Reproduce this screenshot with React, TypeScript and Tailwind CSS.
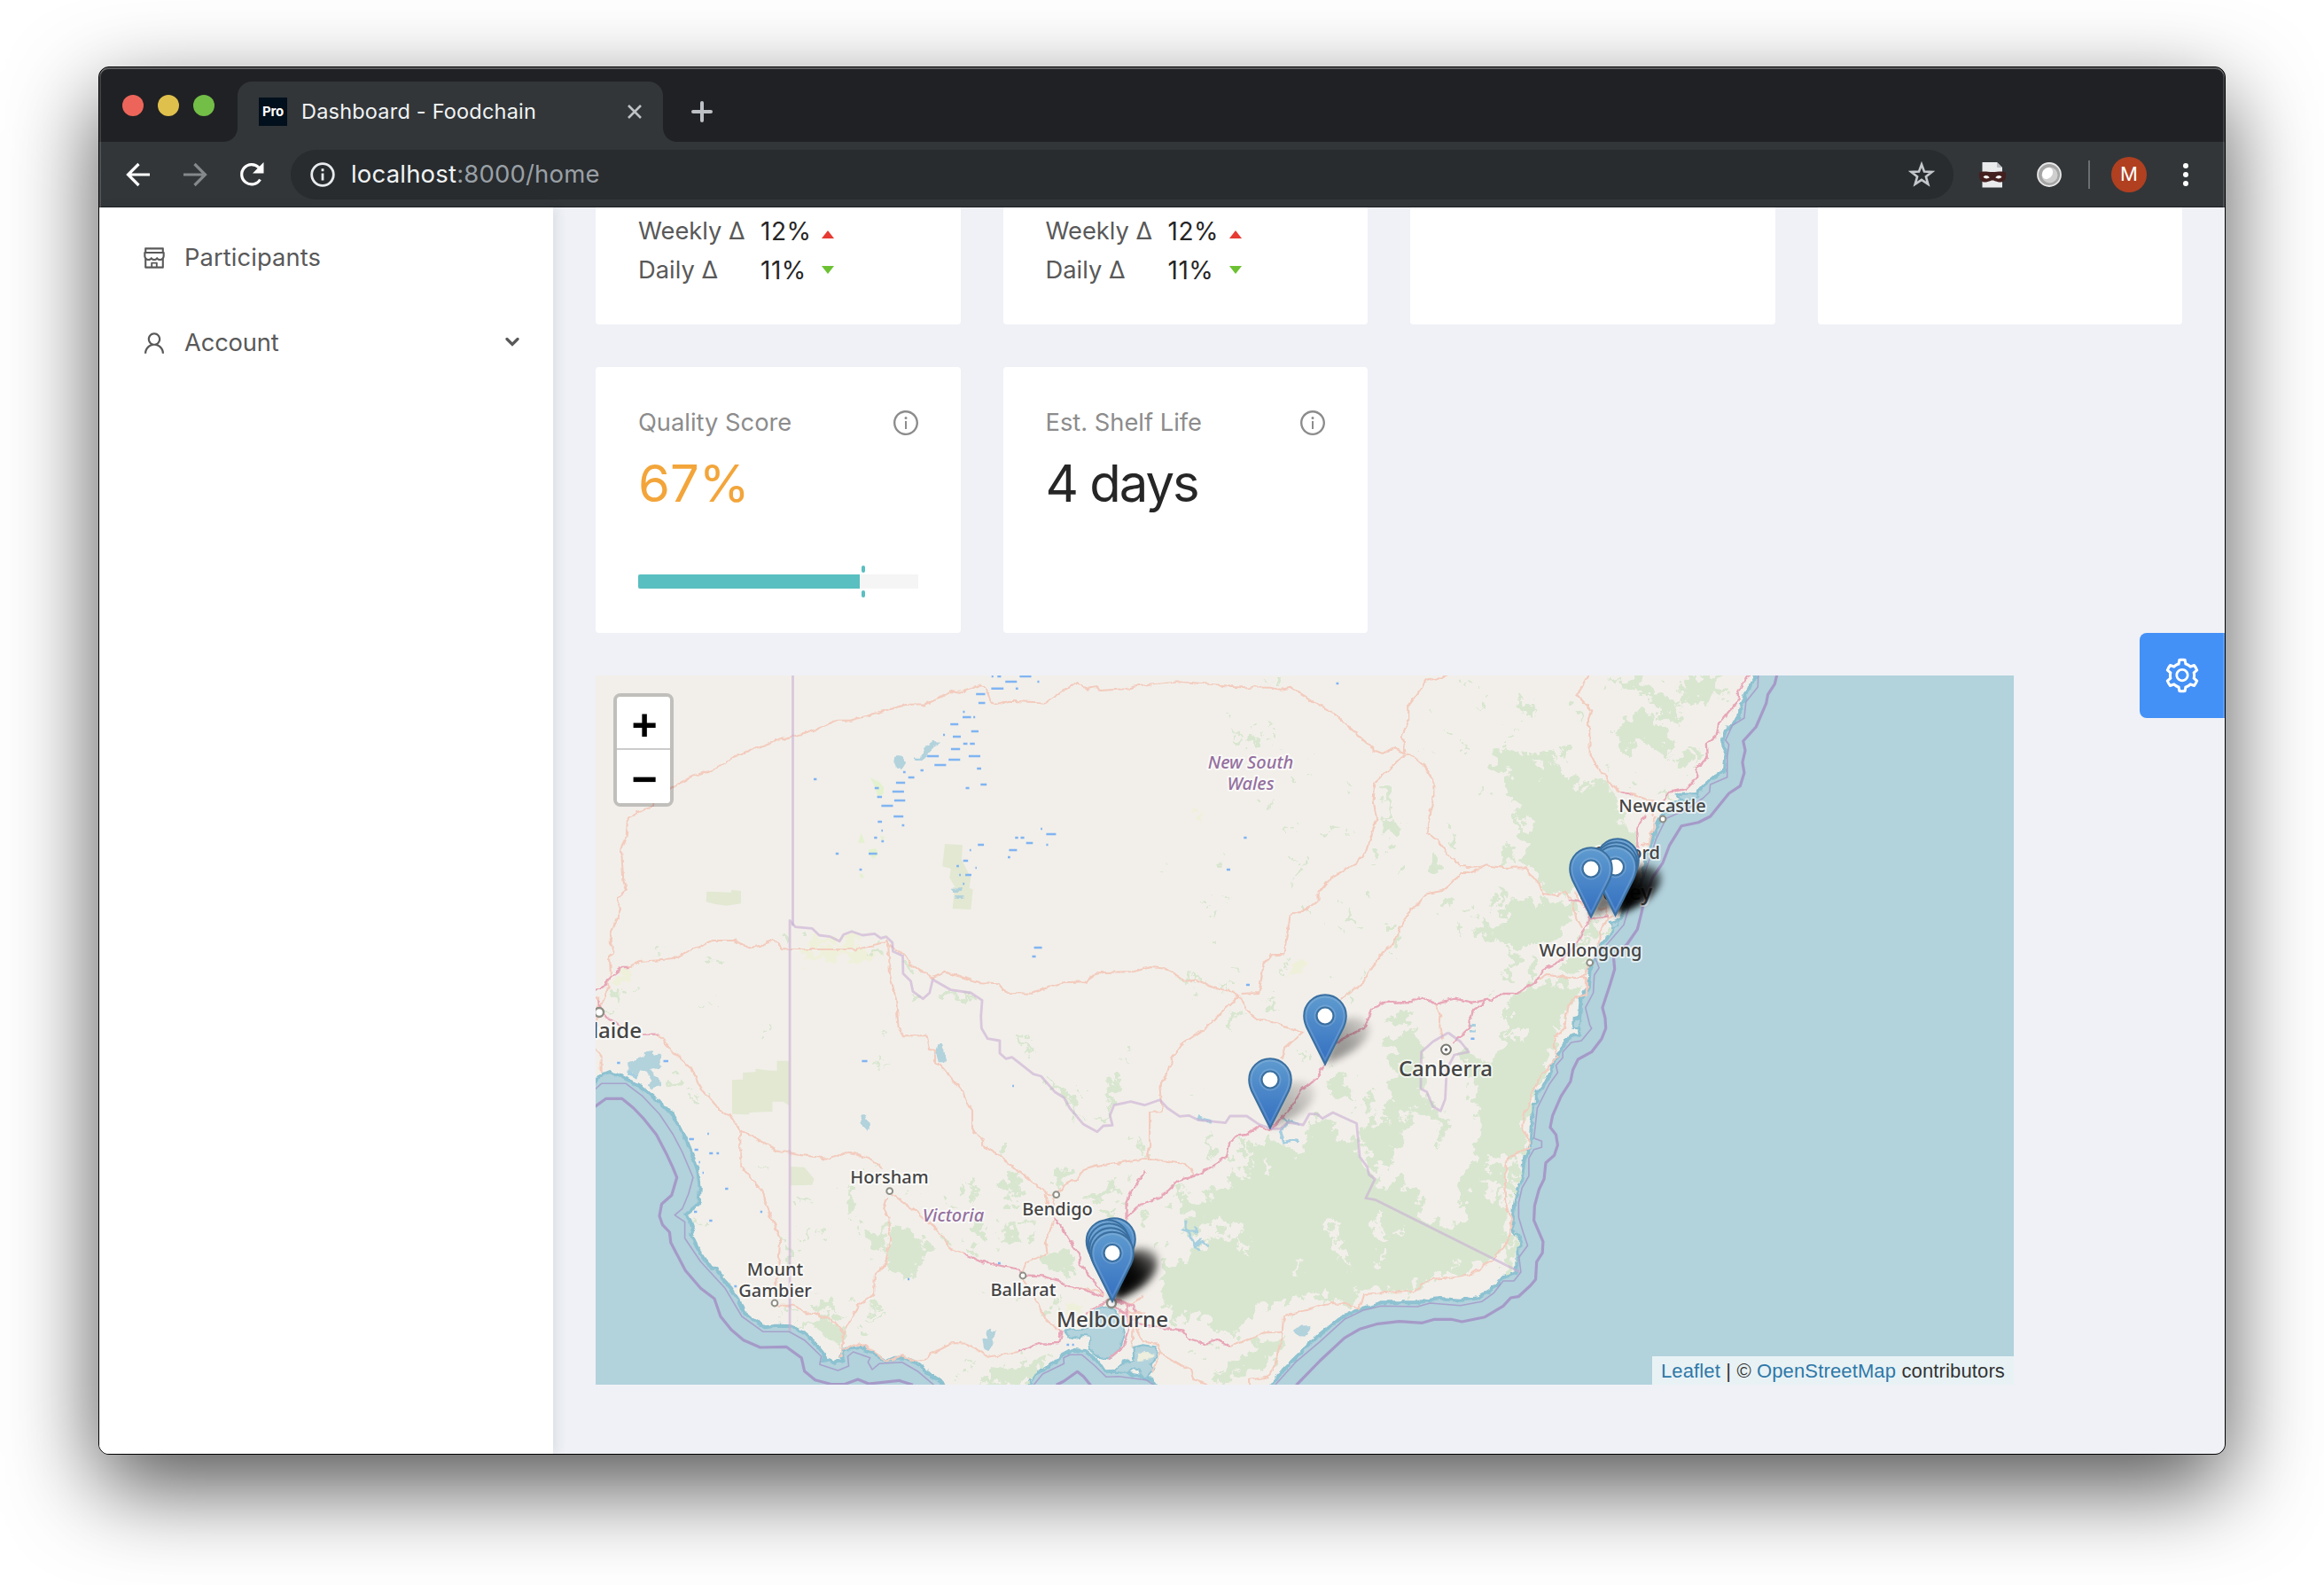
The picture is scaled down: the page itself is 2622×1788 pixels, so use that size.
import React from "react";
import {
  AiOutlineInfoCircle,
  AiOutlineSetting,
  AiOutlineShop,
  AiOutlineUser,
} from "react-icons/ai";

/* ------------------------------------------------------------------ */
/* Map geometry                                                        */
/* ------------------------------------------------------------------ */

// The map is digitised on six sheets: [origin x, origin y, x scale, y scale].
const SHEETS: Record<string, [number, number, number, number]> = {
  A: [-2, -2, 0.34439, 1 / 3],
  B: [528, -2, 0.34439, 1 / 3],
  C: [1028, -2, 0.38265, 1 / 3],
  D: [-2, 398, 0.34439, 1 / 3],
  E: [528, 398, 0.34439, 1 / 3],
  F: [1028, 398, 0.38265, 1 / 3],
};

function points(source: string): [number, number][] {
  let sheet = SHEETS.A;
  const out: [number, number][] = [];
  for (const token of source.trim().split(/\s+/)) {
    if (SHEETS[token]) {
      sheet = SHEETS[token];
      continue;
    }
    const [x, y] = token.split(",").map(Number);
    out.push([sheet[0] + x * sheet[2], sheet[1] + y * sheet[3]]);
  }
  return out;
}

const toPath = (source: string) =>
  "M" + points(source).map(([x, y]) => `${x.toFixed(1)} ${y.toFixed(1)}`).join("L");

const COAST =
  "D -20,200 6,178 20,160 50,147 90,163 130,185 170,212 210,243 250,285 280,330 300,370 320,420 340,480 348,540 345,585 325,610 300,628 315,650 328,690 320,703 340,745 370,790 385,812 400,812 418,835 420,845 450,880 475,920 490,960 520,985 560,1012 600,1007 640,1008 680,1025 720,1060 755,1105 750,1125 770,1120 790,1135 800,1122 815,1127 810,1105 825,1085 870,1080 910,1095 960,1127 985,1115 1020,1115 1060,1135 1100,1170 1140,1200 1160,1240 1400,1240 1428,1205 1445,1170 1490,1145 1530,1110 E 0,1105 30,1088 70,1092 110,1125 135,1162 180,1160 240,1175 290,1188 320,1240 640,1240 680,1205 720,1155 780,1095 840,1035 900,985 960,955 1040,928 1160,928 1230,915 1300,920 1360,912 1400,885 1440,840 1485,825 1485,740 1500,735 1490,700 1470,680 F 18,640 21,600 25,570 43,510 52,440 70,390 75,260 88,250 88,210 105,205 130,150 135,120 160,70 185,30 215,20 C 215,1200 200,1195 200,1170 215,1165 218,1100 240,1060 245,1000 270,930 300,890 315,860 308,845 335,830 345,800 380,740 400,690 410,620 430,560 450,490 490,440 530,420 560,408 580,380 610,350 640,330 645,260 635,235 645,190 685,150 690,110 710,60 730,10 735,-40 A -40,-40";

const FORESTS = [
  // Alpine forest
  "E 390,700 410,640 400,590 370,560 440,575 500,555 560,500 620,505 600,440 640,385 700,380 735,420 790,410 800,330 820,300 860,315 900,370 965,370 975,435 1000,490 1060,540 1090,512 1175,560 1180,595 1150,620 1210,668 1300,660 1320,650 1305,590 1320,480 1370,450 1440,470 1450,600 1450,720 1400,780 1330,825 1200,845 1150,885 1060,890 1000,880 930,930 880,915 800,900 720,930 640,945 600,990 570,1040 490,1020 440,960 400,990 350,975 320,900 330,780 380,790 470,730 500,690 480,640 420,700",
  // Snowy range and far south coast
  "E 1040,40 1160,0 1180,80 1170,210 1200,240 1235,285 1255,380 1230,330 1150,260 1120,300 1100,400 1060,470 1020,470 990,420 970,340 1000,310 1060,300 1060,200 1080,100",
  "E 1290,90 1340,60 1390,150 1420,80 1500,50 1530,0 1568,0 1568,150 1530,280 1500,340 1520,390 1460,430 1380,450 1310,620 1310,500 1350,420 1370,330 1350,250 1330,170",
  "F 0,0 40,40 45,0 130,0 150,50 140,80 80,200 60,280 40,330 30,250 0,280",
  "C 0,1120 60,1050 150,1040 220,1060 200,1100 170,1150 170,1200 0,1200",
  "B 1480,1100 1568,1060 1568,1200 1460,1200",
  "F 10,440 40,460 40,500 5,490",
  "E 1465,690 1500,735 1485,745 1485,820 1440,810 1450,760",
  "F 20,690 45,730 25,750 20,830 0,800",
  // Blue Mountains and Wollemi
  "C 0,250 60,280 130,260 160,320 220,400 270,360 310,390 340,480 380,540 380,600 300,640 210,740 110,740 100,700 60,650 60,620 30,540 20,420 0,400",
  "B 1480,270 1568,290 1568,700 1510,620 1500,480 1530,450 1460,360 1430,310 1395,250 1440,240",
  "C 0,790 60,770 180,770 200,800 170,850 160,890 70,930 0,930",
  "B 1480,750 1540,770 1568,830 1568,930 1450,930 1380,890 1420,850 1480,850",
  "C 60,950 90,960 80,1040 60,1030 70,990",
  "C 170,960 200,940 235,980 220,1020 160,1010",
  "C 240,840 270,820 265,900 220,910",
  "C 270,880 310,860 300,890 275,905",
  "C 340,180 360,140 420,130 480,240 490,270 440,240 400,230 330,280 340,240 310,205",
  "C 310,20 400,10 430,60 480,90 520,150 470,140 400,60 330,40",
  "C 530,6 640,6 610,70 580,110 540,100 520,50",
  "C 550,260 580,250 570,300 555,300",
  "C 500,260 540,260 530,330 510,320",
  // Inland New South Wales
  "B 1045,380 1065,385 1068,440 1065,490 1110,505 1100,550 1065,540 1055,470 1040,410",
  "B 550,195 580,225 562,245",
  "B 600,245 615,210 640,205 640,225",
  "B 670,465 680,430 692,440",
  "B 1485,85 1520,90 1560,140 1500,115",
  "B 1230,780 1260,765 1290,800 1240,790",
  "B 1430,640 1440,575 1470,600 1470,645",
  "B 1200,650 1215,610 1240,640 1220,665",
  "B 1080,655 1100,635 1115,655 1095,675",
  "B 1255,530 1275,535 1285,600 1270,600",
  "B 1350,890 1370,830 1400,870 1380,895",
  "B 548,1145 570,1145 560,1200 548,1200",
  "B 1050,1180 1080,1155 1140,1160 1120,1190",
  // Western Victoria
  "D 895,725 950,660 960,760 930,770",
  "D 970,690 1000,670 1090,710 1095,760 1050,810 1010,860 1000,830 970,820",
  "D 650,990 720,1000 740,970 830,1010 810,1080 770,1060 740,1030",
  "D 720,920 770,920 800,975 760,960",
  "D 1230,640 1290,660 1270,710 1240,690",
  "D 1340,690 1380,650 1385,700 1350,740",
  "D 1225,720 1260,730 1250,770 1230,750",
  "D 1465,780 1500,750 1568,770 1568,830 1500,820",
  "D 1260,1190 1340,1150 1420,1120 1500,1100 1480,1140 1430,1180 1420,1205 1260,1205",
  "D 1330,520 1380,490 1410,560 1360,560",
  "D 830,560 850,550 860,620 840,650",
  "D 1240,510 1255,540 1245,600 1235,580",
  "D 1480,160 1540,200 1568,240 1568,280 1530,230",
  "D 1500,520 1530,475 1568,478 1540,510 1510,560",
  "D 865,1020 900,1010 905,1035 870,1040",
  "E 150,165 170,180 165,240 130,330 110,335 145,270",
  "E 0,215 35,240 60,310 20,260",
  "E 80,570 150,520 210,520 140,570 90,600",
  "E 480,1200 530,1140 610,1100 670,1060 720,1060 700,1110 600,1150 560,1190",
  "E 470,375 490,370 495,450 480,430",
  "E 865,160 925,170 950,240 890,240",
  "E 570,400 610,370 610,410 580,420",
  "E 0,780 40,780 40,820 0,820",
];

const FARMLAND = [
  "D 453,175 488,173 488,150 530,148 530,137 580,143 600,143 600,110 640,110 640,262 620,248 585,248 585,282 510,285 508,292 453,290",
  "D 645,468 690,470 722,510 715,530 645,532",
  "A 370,737 450,740 450,732 482,735 482,778 435,785 398,780 368,772",
  "A 1150,576 1208,580 1205,630 1235,690 1230,725 1242,730 1235,798 1175,795 1182,720 1165,690 1170,660 1142,652",
];

const SOFT_YELLOW = [
  "A 712,888 790,895 810,912 830,890 862,892 862,918 705,920",
  "A 690,938 930,925 920,958 680,965",
  "B 765,960 800,965 790,1000 745,1005",
  "B 440,475 470,475 465,495 440,495",
  "A 60,1010 120,1000 100,1040 60,1040",
  "E 900,680 925,670 925,705 905,705",
  "E 20,930 60,920 60,950 25,960",
];

const CLEARINGS = [
  "E 860,640 890,630 880,700 930,760 940,800 910,780 870,700",
  "E 500,640 530,670 590,680 570,705 510,700 490,670",
  "E 1020,640 1050,650 1060,720 1040,710",
  "E 1070,695 1110,690 1100,710 1080,715",
  "E 1040,750 1070,770 1050,800 1030,770",
  "E 755,810 780,795 770,820",
  "E 660,450 680,440 690,500 670,490",
  "E 1360,510 1420,520 1430,570 1400,590",
  "E 560,710 600,740 580,750",
  "E 1270,780 1280,790 1265,830",
  "B 1540,290 1568,310 1568,340",
  "B 1500,480 1530,500 1520,540",
  "C 60,480 90,520 60,530",
  "C 120,290 150,300 150,320",
];

// Scattered scrub: centre and radii, in sheet coordinates.
const SCRUB =
  "B 690,33,12,5 540,137,7,6 620,180,6,4 652,190,6,5 675,220,7,8 800,270,8,6 752,357,9,8 940,382,9,8 640,413,13,6 805,342,5,4 720,250,4,3 1270,202,10,6 1195,125,12,5 1380,100,14,5 1345,27,20,8 1160,270,6,8 1212,265,6,6 1310,255,7,8 1325,285,7,6 1378,400,5,16 750,520,8,5 880,528,14,6 855,530,6,6 950,540,6,5 1018,622,12,9 1070,572,8,8 785,640,7,14 760,630,9,4 768,670,9,7 765,715,4,14 885,700,8,5 1005,742,9,7 910,768,5,10 940,820,7,12 965,842,12,6 798,790,5,13 465,770,14,7 490,815,6,12 530,780,4,4 515,650,9,13 320,662,9,6 503,913,12,9 845,857,4,4 908,866,5,4 1080,862,9,9 1100,895,12,10 1080,958,6,4 885,1028,6,5 725,988,7,7 975,1012,4,9 940,1105,8,14 678,1122,9,10 695,1080,5,4 400,1030,20,5 450,1045,20,5 525,1050,20,6 430,1085,8,8 555,1008,5,5 1400,770,20,22 1440,800,16,22 1300,865,9,16 1345,800,14,8 1470,960,10,26 1460,1020,12,24 1540,990,14,30 1520,1110,40,26 1550,1160,40,30 1400,1068,6,6 1440,745,20,8 A 395,970,14,12 115,1075,16,10 70,1090,10,30 60,1135,12,6 650,885,12,16 930,940,10,14 1028,1000,10,18 1060,1100,14,8 1160,1085,40,10 1210,1100,30,8 1150,1075,20,8 355,1120,10,4 393,1110,5,8 205,950,14,4 D 570,8,8,10 960,30,8,6 947,118,10,4 270,180,10,10 320,218,14,6 328,250,14,8 380,225,6,6 680,580,14,8 780,540,6,4 750,700,6,12 690,690,8,8 555,460,5,4 625,712,8,8 637,760,8,26 345,655,16,8 900,475,12,5 845,600,10,34 865,670,10,12 1200,560,10,14 1160,590,12,8 1175,610,12,8 1335,415,10,10 1380,500,18,14 1410,545,10,20 1340,520,10,10 1345,620,9,14 1380,600,16,10 1260,650,18,10 1170,725,12,16 1380,690,8,20 1340,720,12,14 1440,700,10,12 1410,650,14,8 925,950,12,10 885,1020,18,10 920,985,8,6 1265,885,8,7 1495,950,10,12 1520,920,5,20 1380,920,14,6 1230,1135,12,5 1410,60,8,26 1425,95,6,10 1200,1170,10,6 1035,545,10,5 860,920,12,4 625,955,6,20 650,960,6,16 E 10,490,14,12 200,92,6,4 300,270,5,3 60,215,5,5 870,130,5,5 960,272,8,5 790,95,6,12 425,225,5,3 245,380,4,16 270,410,4,16 255,400,12,12 640,400,20,16 590,460,16,16 540,440,12,10 700,400,16,16 380,560,16,14 340,600,10,8 270,640,12,8 320,740,10,14 150,620,20,10 180,600,14,8 890,200,24,20 920,200,16,20 1000,250,16,40 1060,380,14,40 1240,350,14,30 1480,540,20,40 430,1100,12,8 480,1080,14,6 460,1120,10,6 640,1070,20,10 730,1000,6,4 550,5,8,4 500,1155,8,6 1380,540,18,22 1330,640,16,8 C 45,105,14,14 70,128,16,8 200,90,10,6 215,135,10,10 170,260,10,18 275,60,6,8 370,370,10,8 300,310,6,4 490,90,12,8 505,145,18,10 435,150,14,20 460,260,20,22 350,265,14,8 590,45,20,40 660,120,6,10 10,205,6,6 480,415,14,8 520,90,12,30 640,80,8,10";

function scrubShapes() {
  let sheet = SHEETS.B;
  const out: { x: number; y: number; rx: number; ry: number }[] = [];
  for (const token of SCRUB.split(" ")) {
    if (SHEETS[token]) {
      sheet = SHEETS[token];
      continue;
    }
    const [x, y, rx, ry] = token.split(",").map(Number);
    out.push({
      x: sheet[0] + x * sheet[2],
      y: sheet[1] + y * sheet[3],
      rx: rx * sheet[2],
      ry: ry * sheet[3],
    });
  }
  return out;
}

const LAKES = [
  "A 985,278 1000,276 1018,288 1022,302 1010,322 995,318 982,300",
  "A 1095,240 1110,228 1135,230 1130,242 1110,250 1098,262 1090,280 1070,292 1050,290 1048,284 1068,284 1080,262",
  "A 1172,728 1210,726 1200,738 1180,738",
  "A 1186,750 1212,750 1212,762 1186,762",
  "D 112,115 165,95 165,78 190,76 200,92 222,88 215,115 222,130 200,140 180,135 195,155 215,165 218,195 185,203 180,185 190,175 175,150 150,145 140,170 125,150 108,165 108,150 118,140",
  "D 1120,75 1125,52 1142,50 1145,75 1155,100 1150,118 1130,118 1125,100",
  "D 875,292 885,292 890,308 905,320 906,340 895,350 880,335",
  "D 1285,1030 1300,1012 1305,1025 1322,1025 1305,1050 1308,1068 1295,1095 1275,1085 1270,1050 1290,1048",
  "E 755,1022 775,1007 805,1005 806,1022 790,1040 762,1038",
  "C 500,408 560,405 570,415 540,430 510,425",
  "C 305,840 330,835 330,855 310,862",
  "C 200,1175 215,1170 215,1200 195,1200",
  // Port Phillip and Western Port
  "E 100,955 130,938 165,950 190,990 198,1040 185,1085 150,1118 115,1112 80,1085 90,1060 85,1040 60,1038 55,1050 20,1045 5,1025 30,1018 80,1015 85,990",
  "E 160,1160 195,1130 230,1125 228,1080 260,1072 300,1078 308,1110 285,1135 300,1150 270,1185 255,1175 250,1155 230,1150 205,1170",
];

const CREEKS = [
  "E 400,650 402,680 415,700 430,735 445,755",
  "E 385,682 410,690 435,690 435,670",
  "E 430,730 455,725 472,740",
  "E 428,735 450,712",
  "E 710,345 722,388 745,378 765,378 765,388",
  "E 715,300 735,320 722,335 708,350",
  "E 440,302 485,316",
  "E 735,310 770,322",
  "B 1330,1188 1350,1190",
  "E 1330,12 1350,12",
  "A 1048,288 1068,290",
  "D 110,150 145,165",
];

// Salt-lake hatching: x, y, length.
const HATCH =
  "A 1303,9,6 1322,9,12 1395,9,38 1348,27,38 1453,27,6 1302,50,40 1382,50,8 1252,69,30 1260,99,22 1209,129,6 1208,147,28 1243,147,6 1168,171,26 1236,195,24 1144,207,6 1176,213,26 1210,237,14 1232,237,16 1170,255,30 1092,279,38 1228,279,38 1162,291,38 1116,309,38 1255,321,14 1013,333,8 1070,327,10 1030,351,20 720,357,10 990,369,30 1267,375,20 920,387,14 1218,387,12 978,399,38 928,417,16 984,429,36 942,447,38 982,483,32 930,501,14 1009,513,8 942,531,5 918,555,10 942,567,8 1464,525,5 1482,543,32 1380,555,10 1398,555,12 1416,573,22 1482,579,6 1258,579,20 1360,597,26 1356,621,8 1231,597,5 792,609,10 900,609,28 1210,633,16 1188,651,8 1250,657,4 870,663,8 1197,681,5 1217,681,20 1209,711,5 1442,927,26 1436,957,12 B 893,33,8 590,555,10 534,663,12 598,1053,12 D 228,111,16 76,117,10 878,111,18 1371,195,5 312,375,16 372,357,5 330,411,12 378,423,12 402,423,8 344,453,4 356,489,4 430,543,10 545,621,7 328,621,10 378,651,10 1028,849,6 1324,795,8 460,873,8 1550,1071,6 E 10,1071,8 28,1071,6 1334,35,12";

function hatchSegments() {
  let sheet = SHEETS.A;
  const out: string[] = [];
  for (const token of HATCH.split(" ")) {
    if (SHEETS[token]) {
      sheet = SHEETS[token];
      continue;
    }
    const [x, y, length] = token.split(",").map(Number);
    out.push(
      `M${(sheet[0] + x * sheet[2]).toFixed(1)} ${(sheet[1] + y * sheet[3]).toFixed(1)}h${(length * sheet[2]).toFixed(1)}`,
    );
  }
  return out.join("");
}

const MARITIME = [
  "D 0,268 40,238 92,238 130,270 165,308 205,360 240,430 258,470 272,505 255,565 222,595 215,635 225,665 248,690 252,725 300,820 350,880 395,915 415,975 450,1020 490,1055 545,1080 630,1078 680,1115 690,1160 725,1190 780,1205 820,1205 865,1188 900,1203 1000,1192 1045,1207",
  "D 1515,1207 E 0,1195 45,1162 65,1178 90,1210",
  "E 762,1208 840,1125 920,1048 970,1018 1030,1000 1100,992 1175,997 1215,985 1270,985 1305,993 1380,977 1440,940 1465,912 1490,908 1530,870 F 85,850 88,790 105,760 107,722 80,650 82,600 95,545 110,510 115,455 140,430 150,395 145,360 128,335 135,295 160,230 188,180 195,140 210,105 250,80 280,35 292,0 C 290,1165 282,1130 305,1050 318,1000 315,960 355,915 385,865 395,820 405,770 430,690 460,640 480,580 515,515 565,503 600,483 655,405 688,380 700,335 695,300 703,260 697,228 735,180 765,100 770,70 790,35 797,0",
];

const BASELINE = [
  "D 0,210 25,187 105,187 160,230 215,290 260,360 290,420 325,505 310,560 290,610 265,632 298,655 298,710 350,790 430,880 485,975 555,1027 640,1027 690,1055 745,1110 740,1138 800,1158 835,1143 832,1110 850,1095 905,1115 898,1130 912,1155 935,1135 1010,1130 1060,1160 1115,1208",
  "D 1440,1208 1470,1170 1540,1135 E 0,1115 20,1105 60,1105 100,1140 140,1180 180,1178 270,1190 300,1210",
  "E 692,1208 760,1130 840,1060 920,985 980,955 1040,940 1160,942 1200,930 1300,938 1370,925 1410,895 1440,855 1475,855 1498,825 1492,775 1520,735 F 48,690 35,640 35,590 45,540 65,500 65,440 80,410 103,403 103,382 80,372 90,270 125,190 150,150 145,125 165,100 165,80 190,48 220,42 250,0 C 245,1190 232,1130 255,1080 258,1020 272,995 260,960 300,910 345,850 360,790 400,700 440,560 470,490 530,460 580,420 598,400 600,375 650,350 650,280 655,240 645,225 665,175 700,150 705,95 740,45 742,0",
];

const STATE_BORDERS = [
  "A 652,0 652,853",
  "D 642,1025 A 642,835 660,857 715,862 738,885 775,890 805,905 818,883 845,872 880,885 920,880 940,895 958,890 978,910 980,940 1012,955 1013,1015 1038,1040 1045,1075 1078,1100 1100,1080 1110,1035 1170,1070 1235,1080 1272,1105 1268,1160 D 1270,0 1290,35 1330,42 1330,85 1350,103 1370,98 1440,155 1465,162 1510,215 1540,235 E 20,270 65,325 110,350 130,330 160,328 152,295 165,260 220,248 265,260 315,242 340,270 380,298 410,295 440,310 530,320 545,297 600,297 640,325 680,340 710,340 735,318 785,327 805,290 830,290 848,305 882,285 960,322 970,435 995,470 1000,495 1020,510 990,575 1020,580 1495,825",
  "E 1260,15 1300,45 1327,80 1280,90 1255,140 1250,240 1235,280 1210,265 1190,215 1170,205 1172,80 1210,45 1260,15",
];

const ROADS = [
  "A 20,1130 40,1090 55,1020 52,950 65,945 55,910 55,880 90,800 78,760 105,735 97,700 90,600 107,550 110,500 140,470 185,450 250,390 315,350 400,322 450,285 515,257 600,225 700,200 800,158 840,158 1020,105 1085,103 1130,85 1170,57 1195,62 1245,45 1262,37 1285,48 1300,95 1320,105 1360,92 1485,98 B 0,57 35,33 80,50 105,45 120,57 200,52 240,43 385,27 530,40 545,45 675,47 710,53 745,47 895,143 1020,260 1045,270 1080,252 1120,268 1135,272 1185,315 1212,360 1212,420 1200,470 1190,540 1220,558 1250,600 1300,650 1330,655 1380,648 1440,657 1515,655 1525,680 1560,712 C 105,745 150,750 175,740 190,765",
  "B 1120,268 1108,215 1130,160 1130,105 1190,25 1270,0",
  "B 1120,272 1020,370 1015,430 1025,490 1005,560 990,610 960,640 910,670 870,695 835,740 835,765 800,795 742,820 722,950 680,952 655,985 640,1080 580,1083",
  "A 1110,1030 1150,1010 1265,1045 1325,1048 1350,1080 1435,1082 1500,1057 B 0,1045 70,1042 110,1012 230,1008 285,993 335,998 395,1040 430,1037 490,1063 550,1075 575,1090 600,1140 635,1170 670,1172 730,1197 E 785,15 725,65 712,105",
  "B 575,1090 465,1200 E 465,0 385,55 355,100 350,130 315,200 322,282 282,285 282,400 275,440",
  "A 110,993 150,975 255,967 300,945 390,903 460,903 510,928 550,920 587,897 615,930 640,933 860,932 955,910",
  "A 958,900 965,920 970,1020 990,1100 998,1200 D 1015,25 1090,25 1102,72 1118,75 1118,120 1135,125 1210,215 1215,235 1240,275 1240,350 1275,380 1275,398 1335,435 1345,450 1400,490 1480,555 1505,562",
  "A 955,900 980,930 1020,950 1040,985 1110,1030",
  "D 210,20 265,85 320,135 345,195 420,285 445,293 480,345 600,412 660,427 775,442 825,420 900,437 945,475",
  "D 480,345 480,465 550,550 575,620 610,715 605,800 598,870",
  "D 600,938 655,938 700,965 720,962 790,995 818,1030 815,1085 808,1110",
  "D 818,1030 865,938 918,903 920,835 955,800 970,715 965,640 950,610 962,570",
  "D 975,560 1050,615 1110,670 1140,700 1165,745 1215,765",
  "D 815,1090 860,1067 910,1085 960,1127 1010,1107 1045,1125 1080,1122 1110,1100 1175,1065 1220,1067 1255,1085 1290,1112 1390,1095",
  "D 1405,825 1415,795 1485,760 1480,725 1510,645 1505,570",
  "D 1480,560 1485,600",
  "D 1405,850 1450,920 1480,985 1530,1025",
  "D 1525,555 1535,535 E 0,530 45,510 65,480 110,465 275,440 390,458 420,475 428,500",
  "B 1215,1115 1235,1160 E 1232,0 1245,40",
  "B 905,1103 980,1045 1005,1000 1045,940 1080,915 1120,820 1165,775 1190,745 1240,735 1305,675 1330,675 1380,652",
  "C 242,0 207,72 252,125 243,150 245,270 265,315 330,398 370,405 430,430 430,480",
  "C 440,480 420,575 395,580",
  "C 245,980 225,1025 235,1035 235,1085 195,1100 178,1130 170,1200 F 140,30 138,65 150,92 95,170 75,215 65,260 55,280 45,330 65,380 65,405 10,435 E 1455,440 1445,500 1450,590 1468,650 1455,720 1400,790 1330,835 1200,850 1150,890 1060,893 985,900 970,950 945,935 880,930 720,975 715,1050 700,1120 670,1180 610,1190 610,1210",
  "E 545,1077 660,1030 715,1028",
  "E 235,1010 260,1060 310,1070 320,1100 385,1140 415,1155 425,1190 470,1207",
  "E 318,1100 290,1165",
  "E 30,882 60,880 110,890 130,905",
  "E 180,920 220,935 260,905",
  "E 180,960 230,970 225,1080",
  "E 200,935 215,960 265,965",
  "C 95,1035 120,1020 190,1030 235,1028",
  "C 195,770 205,830 220,860",
  "C 270,930 275,870 300,830 315,820",
  "C 205,740 210,770 240,790",
  "D 0,60 25,95 25,150",
  "A 0,1090 15,1100 12,1200",
  "C 270,800 290,790 300,830",
];

const MOTORWAYS = [
  "A 0,1075 35,1060 60,1020 95,993 115,993",
  "A 15,1110 25,1140 50,1170 90,1190",
  "D 160,20 210,20",
  "D 1215,765 1275,792 1390,815 1405,835 1470,838 1525,855 E 0,868 70,885 100,900 130,910",
  "D 1390,1095 1460,1067 1525,1065 1535,1025 1530,1025 1520,1045",
  "D 1510,645 1545,690 E 0,685 20,720 50,760 55,800 130,895",
  "E 205,640 240,605 320,568 375,515 430,500 500,460 530,435 540,395 565,365 600,360 640,330 680,343 740,275 780,210 830,170 855,120 880,60 925,30 985,0 B 985,1200 1010,1140 1045,1113 1140,1110 1165,1093 1220,1115 1280,1100 1340,1112 1400,1102 1440,1083 1485,1083 1545,1045 C 110,1000 155,975 205,915 245,830 300,820",
  "E 160,900 190,800 205,640 205,590 220,550 240,530 270,480",
  "B 1390,1105 1340,1140 1327,1200 E 1275,50",
  "C 715,0 683,60 685,85 625,170 618,210 590,235 593,290 560,315 560,355 530,390 480,400 460,430",
  "C 335,398 370,412",
  "C 410,480 385,520 385,600",
  "C 185,765 225,770 245,830",
  "E 150,930 250,1000 340,1017 390,1025 410,1050 465,1067 500,1053 545,1077",
  "E 145,1120 195,1080 215,1020 205,930 160,915",
  "E 70,965 110,940 150,920 230,940 235,960",
];

type Place = {
  lines: string[];
  x: number;
  y: number;
  size?: number;
  anchor?: "middle" | "end";
  region?: boolean;
};

const PLACES: Place[] = [
  { lines: ["New South", "Wales"], x: 739, y: 105, region: true },
  { lines: ["Victoria"], x: 403.5, y: 616, region: true },
  { lines: ["Newcastle"], x: 1203.5, y: 153.5 },
  { lines: ["Gosford"], x: 1201, y: 207, anchor: "end" },
  { lines: ["Sydney"], x: 1192, y: 253, size: 24, anchor: "end" },
  { lines: ["Wollongong"], x: 1122.5, y: 317 },
  { lines: ["Canberra"], x: 959, y: 452, size: 24 },
  { lines: ["laide"], x: 52, y: 409, size: 24, anchor: "end" },
  { lines: ["Horsham"], x: 331.5, y: 573 },
  { lines: ["Bendigo"], x: 521, y: 609 },
  { lines: ["Ballarat"], x: 482.5, y: 700 },
  { lines: ["Mount", "Gambier"], x: 202.5, y: 677 },
  { lines: ["Melbourne"], x: 583, y: 735, size: 24 },
];

const TOWN_DOTS = [
  [1204, 162],
  [1121.7, 324],
  [331.7, 581.7],
  [519.7, 585.7],
  [482, 677],
  [202, 708],
];

// Pin tips, back to front.
const PINS = [
  [1153, 263],
  [1151.5, 267],
  [1150.5, 271],
  [1123, 273],
  [823, 439],
  [761, 511],
  [585, 691],
  [577.5, 693],
  [579.5, 697],
  [581, 702],
  [583, 706.5],
];

const SHADOWS = [
  { x: 1150.5, y: 270, opacity: 1 },
  { x: 1152, y: 266, opacity: 1 },
  { x: 1123, y: 272, opacity: 0.6 },
  { x: 823, y: 438, opacity: 0.42 },
  { x: 761, y: 510, opacity: 0.3 },
  { x: 583, y: 706, opacity: 1 },
  { x: 584, y: 698, opacity: 1 },
];

function MapDrawing() {
  return (
    <svg viewBox="0 0 1600 800" className="block h-full w-full">
      <defs>
        <filter id="ragged" x="-5%" y="-5%" width="110%" height="110%" colorInterpolationFilters="sRGB">
          <feTurbulence type="fractalNoise" baseFrequency="0.07" numOctaves="4" seed="7" result="n" />
          <feDisplacementMap in="SourceGraphic" in2="n" scale="34" xChannelSelector="R" yChannelSelector="G" />
        </filter>
        <filter id="wobble" x="-5%" y="-5%" width="110%" height="110%" colorInterpolationFilters="sRGB">
          <feTurbulence type="fractalNoise" baseFrequency="0.12" numOctaves="2" seed="3" result="n" />
          <feDisplacementMap in="SourceGraphic" in2="n" scale="6" xChannelSelector="R" yChannelSelector="G" />
        </filter>
        <filter id="pinShadow" x="-60%" y="-60%" width="220%" height="220%">
          <feGaussianBlur stdDeviation="4" />
        </filter>
        <linearGradient id="pinFill" x1="0" y1="0" x2="0" y2="1">
          <stop offset="0" stopColor="#5f9bcf" />
          <stop offset="1" stopColor="#336fc0" />
        </linearGradient>
        <linearGradient id="shadowFill" x1="0" y1="1" x2="0.9" y2="0.1">
          <stop offset="0" stopColor="#000" stopOpacity="1" />
          <stop offset="0.55" stopColor="#000" stopOpacity="0.8" />
          <stop offset="1" stopColor="#000" stopOpacity="0.3" />
        </linearGradient>
        <clipPath id="land">
          <path d={toPath(COAST) + "Z"} />
        </clipPath>
      </defs>

      <rect width="1600" height="800" fill="#b2d2dc" />
      <g filter="url(#wobble)">
        <path d={toPath(COAST) + "Z"} fill="#f2efea" stroke="#8dc2d1" strokeWidth="4" strokeLinejoin="round" />
      </g>

      <g clipPath="url(#land)">
        <g fill="#e2e8d2">
          {FARMLAND.map((d) => (
            <path key={d} d={toPath(d) + "Z"} />
          ))}
        </g>
        <g filter="url(#ragged)">
          <g fill="#eff0da">
            {SOFT_YELLOW.map((d) => (
              <path key={d} d={toPath(d) + "Z"} />
            ))}
          </g>
          <g fill="#d8e6cf">
            {FORESTS.map((d) => (
              <path key={d} d={toPath(d) + "Z"} />
            ))}
            {scrubShapes().map((s, i) => (
              <ellipse key={i} cx={s.x} cy={s.y} rx={s.rx} ry={s.ry} />
            ))}
          </g>
          <g fill="#f2efea">
            {CLEARINGS.map((d) => (
              <path key={d} d={toPath(d) + "Z"} />
            ))}
          </g>
        </g>
        <g fill="#e3f1cf">
          <path d={toPath("A 905,352 935,366 950,385 948,408 930,415 920,380") + "Z"} />
          <path d={toPath("A 876,540 888,572 866,572") + "Z"} />
          <path d={toPath("A 900,595 925,592 932,612 915,626 902,612") + "Z"} />
          <path d={toPath("A 938,548 952,552 946,570") + "Z"} />
          <path d={toPath("A 870,675 882,680 884,692 874,690") + "Z"} />
        </g>
      </g>

      <g filter="url(#wobble)">
        <g fill="#b2d2dc">
          {LAKES.map((d, i) => (
            <path key={d} d={toPath(d) + "Z"} stroke={i > 8 ? "#8dc2d1" : "none"} strokeWidth="2" />
          ))}
          <path d={toPath("E 240,1098 275,1095 300,1105 275,1125 245,1128") + "Z"} fill="#edeedd" />
        </g>
        <g fill="none" stroke="#a6cfe0" strokeWidth="3">
          {CREEKS.map((d) => (
            <path key={d} d={toPath(d)} />
          ))}
        </g>
        <g fill="none" stroke="#f3cbbd" strokeWidth="2.1" strokeLinejoin="round">
          {ROADS.map((d) => (
            <path key={d} d={toPath(d)} />
          ))}
        </g>
        <g fill="none" stroke="#e8a6b8" strokeWidth="2.3" strokeLinejoin="round">
          {MOTORWAYS.map((d) => (
            <path key={d} d={toPath(d)} />
          ))}
        </g>
      </g>

      <path d={hatchSegments()} fill="none" stroke="#80b4f2" strokeWidth="2.4" />

      <g fill="none" strokeLinejoin="round">
        <g stroke="#c9aed4" strokeOpacity="0.62" strokeWidth="2.8">
          {STATE_BORDERS.map((d) => (
            <path key={d} d={toPath(d)} />
          ))}
        </g>
        <g stroke="#a59ac8" strokeWidth="3.2">
          {MARITIME.map((d) => (
            <path key={d} d={toPath(d)} />
          ))}
        </g>
        <g stroke="#a59ac8" strokeOpacity="0.85" strokeWidth="1.6">
          {BASELINE.map((d) => (
            <path key={d} d={toPath(d)} />
          ))}
        </g>
      </g>

      <g fill="#fff" stroke="#8f8f86" strokeWidth="2">
        {TOWN_DOTS.map(([x, y]) => (
          <circle key={x} cx={x} cy={y} r="3.4" />
        ))}
        <circle cx="4" cy="380" r="5" strokeWidth="2.4" />
        <circle cx="582" cy="708" r="5" strokeWidth="2.4" />
        <circle cx="959.5" cy="422" r="5.4" stroke="#77776f" />
        <circle cx="959.5" cy="422" r="1.8" fill="#666" stroke="none" />
      </g>

      <g
        fontFamily="'Noto Sans', 'Open Sans', sans-serif"
        fontWeight="500"
        stroke="#fff"
        strokeOpacity="0.65"
        strokeWidth="4"
        strokeLinejoin="round"
        paintOrder="stroke"
      >
        {PLACES.map((p) => (
          <text
            key={p.lines[0]}
            textAnchor={p.anchor ?? "middle"}
            fontSize={p.size ?? 20}
            fontStyle={p.region ? "italic" : "normal"}
            fill={p.region ? "#94709f" : "#444"}
          >
            {p.lines.map((line, i) => (
              <tspan key={line} x={p.x} y={p.y + i * 24}>
                {line}
              </tspan>
            ))}
          </text>
        ))}
      </g>

      {SHADOWS.map((s) => (
        <path
          key={`${s.x}-${s.y}`}
          transform={`translate(${s.x} ${s.y})`}
          d="M0 0L14 -46C30 -58 56 -52 49 -33C42 -17 14 -4 0 0Z"
          fill="url(#shadowFill)"
          opacity={s.opacity}
          filter="url(#pinShadow)"
        />
      ))}

      {PINS.map(([x, y]) => (
        <g key={`${x}-${y}`} transform={`translate(${x - 25} ${y - 80})`}>
          <path
            d="M25 1.2C11.8 1.2 1.2 11.8 1.2 25C1.2 31 3 36 6 41.5L25 79.5L44 41.5C47 36 48.8 31 48.8 25C48.8 11.8 38.2 1.2 25 1.2Z"
            fill="url(#pinFill)"
            stroke="#3a6f9f"
            strokeWidth="2"
          />
          <path
            d="M25 3.4C13 3.4 3.4 13 3.4 25C3.4 31 5.2 35.6 8 40.5L25 74.5L42 40.5C44.8 35.6 46.6 31 46.6 25C46.6 13 37 3.4 25 3.4Z"
            fill="none"
            stroke="#fff"
            strokeOpacity="0.14"
            strokeWidth="2"
          />
          <circle cx="25" cy="25" r="11.5" fill="none" stroke="#fff" strokeOpacity="0.14" strokeWidth="2" />
          <circle cx="25" cy="25" r="9.5" fill="#fff" stroke="#3a6f9f" strokeWidth="2.2" />
        </g>
      ))}
    </svg>
  );
}

/* ------------------------------------------------------------------ */
/* Browser chrome                                                      */
/* ------------------------------------------------------------------ */

function TabStrip() {
  return (
    <div className="flex h-[84px] items-end bg-[#202124]">
      <div className="mb-[29px] ml-[26px] flex gap-4">
        <span className="size-6 rounded-full bg-[#ed655a]" />
        <span className="size-6 rounded-full bg-[#e0c04c]" />
        <span className="size-6 rounded-full bg-[#72be47]" />
      </div>
      <svg className="ml-[10px] h-4 w-4" viewBox="0 0 16 16">
        <path d="M16 0V16H0C9 16 16 9 16 0Z" fill="#323639" />
      </svg>
      <div className="flex h-[68px] w-[480px] items-center rounded-t-2xl bg-[#323639] pl-6">
        <span className="flex size-8 items-center justify-center bg-[#020f1c] text-[15px] font-bold tracking-[-0.3px] text-white">
          Pro
        </span>
        <span className="ml-4 whitespace-nowrap text-[23.5px] tracking-[0.2px] text-[#f1f3f4]">
          Dashboard - Foodchain
        </span>
        <svg className="mr-6 ml-auto size-4" viewBox="0 0 16 16" stroke="#c0c3c6" strokeWidth="2.6">
          <path d="M1 1L15 15M15 1L1 15" />
        </svg>
      </div>
      <svg className="h-4 w-4" viewBox="0 0 16 16">
        <path d="M0 0V16H16C7 16 0 9 0 0Z" fill="#323639" />
      </svg>
      <svg className="mb-[22px] ml-4 size-6" viewBox="0 0 24 24" stroke="#bdc1c6" strokeWidth="4" strokeLinecap="round">
        <path d="M12 2V22M2 12H22" />
      </svg>
    </div>
  );
}

function MaskedPageIcon() {
  return (
    <svg className="h-[30px] w-8" viewBox="0 0 32 30">
      <path d="M4.5 1H21L27 7V29.5H4.500Z" fill="#e9eaec" />
      <path d="M21 1V7H27Z" fill="#b9bcc0" />
      <path
        d="M1 12.5C6 10.5 10 12 16 12C22 12 26 10.5 31 12.5C32 18 30 23.5 25 23.5C20.5 23.5 18.5 21.5 16 21.5C13.5 21.5 11.5 23.5 7 23.5C2 23.5 0 18 1 12.5Z"
        fill="#43201f"
      />
      <path d="M5.5 17.5C7.5 15 11 15.5 12.8 18.3C10.5 20 7 19.8 5.5 17.5ZM26.5 17.5C24.5 15 21 15.5 19.2 18.3C21.5 20 25 19.8 26.5 17.5Z" fill="#fff" />
    </svg>
  );
}

function OrbIcon() {
  return (
    <svg className="size-7" viewBox="0 0 28 28">
      <circle cx="14" cy="14" r="13" fill="#a5a5a5" stroke="#e8e8e8" strokeWidth="1.8" />
      <circle cx="14.5" cy="14.5" r="9" fill="#cfcfcf" />
      <ellipse cx="12" cy="12.5" rx="5.5" ry="7" transform="rotate(38 12 12.5)" fill="#fff" />
    </svg>
  );
}

function Toolbar() {
  return (
    <div className="flex h-[74px] items-center border-b border-[#1c1e20] bg-[#323639]">
      <svg className="ml-[30px] size-7" viewBox="0 0 28 28" fill="none" stroke="#fff" strokeWidth="3.2">
        <path d="M14.5 2L2.5 14L14.5 26M2.5 14H27" />
      </svg>
      <svg className="ml-9 size-7" viewBox="0 0 28 28" fill="none" stroke="#85888a" strokeWidth="3.2">
        <path d="M13.5 2L25.5 14L13.5 26M25.5 14H1" />
      </svg>
      <svg className="ml-9 size-7" viewBox="0 0 28 28">
        <path d="M23.5 19.5A11.2 11.2 0 1 1 22 6" fill="none" stroke="#fff" strokeWidth="3.2" />
        <path d="M27.5 0V12.5H15Z" fill="#fff" />
      </svg>

      <div className="ml-[30px] flex h-14 w-[1876px] items-center rounded-full bg-[#282c2f] pr-[21px] pl-[22px]">
        <svg className="size-7" viewBox="0 0 28 28" fill="none" stroke="#e8eaed" strokeWidth="2.8">
          <circle cx="14" cy="14" r="12.3" />
          <path d="M14 12.5V20.5M14 7.3V10.2" />
        </svg>
        <span className="ml-[18px] whitespace-nowrap text-[27.5px] tracking-[0.18px] text-[#9aa0a6]">
          <span className="text-[#f1f3f4]">localhost</span>:8000/home
        </span>
        <svg className="ml-auto h-[30px] w-[30px]" viewBox="0 0 30 30" fill="none" stroke="#c4c8cc" strokeWidth="2.6">
          <path d="M15 3.5L18 11.6L26.7 11.9L19.9 17.3L22.3 25.8L15 20.9L7.7 25.8L10.1 17.3L3.3 11.9L12 11.6Z" />
        </svg>
      </div>

      <div className="ml-7">
        <MaskedPageIcon />
      </div>
      <div className="ml-[34px]">
        <OrbIcon />
      </div>
      <span className="ml-[30px] h-8 w-0.5 bg-[#6b6f73]" />
      <span className="ml-6 flex size-10 items-center justify-center rounded-full bg-[#b04020] text-[22px] text-white">
        M
      </span>
      <span className="ml-[41px] flex flex-col gap-1">
        <span className="size-1.5 rounded-full bg-white" />
        <span className="size-1.5 rounded-full bg-white" />
        <span className="size-1.5 rounded-full bg-white" />
      </span>
    </div>
  );
}

/* ------------------------------------------------------------------ */
/* Page                                                                */
/* ------------------------------------------------------------------ */

function Sidebar() {
  return (
    <nav className="relative z-10 h-full w-[512px] shrink-0 bg-white pt-[9px] text-[27.3px] text-[#595959] shadow-[4px_0_12px_rgba(29,55,65,0.09)]">
      <div className="flex h-24 items-center pl-[47px]">
        <AiOutlineShop className="size-[30px]" />
        <span className="ml-[19px] tracking-[0.1px]">Participants</span>
      </div>
      <div className="flex h-24 items-center pr-[38px] pl-[47px]">
        <AiOutlineUser className="size-[30px]" />
        <span className="ml-[19px] tracking-[-0.15px]">Account</span>
        <svg className="mt-[-2px] ml-auto h-3 w-4" viewBox="0 0 16 12" fill="none" stroke="#595959" strokeWidth="3.2" strokeLinecap="round">
          <path d="M2 2.5L8 8.5L14 2.5" />
        </svg>
      </div>
    </nav>
  );
}

function Trend({ label, value, up }: { label: string; value: string; up: boolean }) {
  return (
    <div className="flex h-11 items-center">
      <span className="w-[138px] whitespace-nowrap text-[#595959]">{label}</span>
      <span className="w-[69px] whitespace-nowrap text-[28px] tracking-[0.5px] text-[#262626]">{value}</span>
      {up ? (
        <svg className="mt-[6px] h-[9px] w-3.5" viewBox="0 0 14 9">
          <path d="M7 0L14 9H0Z" fill="#e63a33" />
        </svg>
      ) : (
        <svg className="mt-[-1px] h-[9px] w-3.5" viewBox="0 0 14 9">
          <path d="M0 0H14L7 9Z" fill="#6cc132" />
        </svg>
      )}
    </div>
  );
}

function TrendCard() {
  return (
    <div className="h-[132px] rounded-b bg-white px-12 pt-[5px] text-[27.3px]">
      <Trend label="Weekly Δ" value="12%" up />
      <Trend label="Daily Δ" value="11%" up={false} />
    </div>
  );
}

function StatCard({ title, value, tone, children }: { title: string; value: string; tone: string; children?: React.ReactNode }) {
  return (
    <div className="h-[300px] rounded bg-white px-12 pt-[41px]">
      <div className="flex h-11 items-center justify-between text-[27.3px] text-[#8c8c8c]">
        <span>{title}</span>
        <AiOutlineInfoCircle className="mr-[-2px] size-8" />
      </div>
      <div className={`mt-2 h-[76px] text-[58px] leading-[76px] ${tone}`}>{value}</div>
      {children}
    </div>
  );
}

function QualityBar() {
  return (
    <div className="relative mt-[55px] py-2.5">
      <div className="h-4 bg-[#f5f5f5]">
        <div className="h-4 w-[250px] rounded-l-[2px] bg-[#5abfc0]" />
      </div>
      <span className="absolute top-0 left-[252px] h-2 w-1 rounded-full bg-[#5abfc0]" />
      <span className="absolute bottom-0 left-[252px] h-2 w-1 rounded-full bg-[#5abfc0]" />
    </div>
  );
}

function LeafletMap() {
  return (
    <div className="relative mt-12 h-[800px] w-[1600px] overflow-hidden">
      <MapDrawing />
      <div className="absolute top-5 left-5 w-[68px] rounded-lg border-4 border-black/20 bg-clip-padding font-['Liberation_Sans',sans-serif] text-[50px] font-bold text-black">
        <div className="flex h-[60px] items-center justify-center rounded-t border-b-2 border-[#ccc] bg-white pt-1.5 pl-0.5">+</div>
        <div className="flex h-[60px] items-center justify-center rounded-b bg-white pt-1.5 pl-0.5">−</div>
      </div>
      <div className="absolute right-0 bottom-0 flex h-8 items-center whitespace-pre bg-white/70 px-2.5 font-['Liberation_Sans',sans-serif] text-[22px] tracking-[0.14px] text-[#333]">
        <span className="text-[#2f78a8]">Leaflet</span> | © <span className="text-[#2f78a8]">OpenStreetMap</span> contributors
      </div>
    </div>
  );
}

export default function App() {
  return (
    <div className="h-[1788px] w-[2622px] overflow-hidden bg-white pt-[75px] pl-[111px] font-[Inter,Roboto,sans-serif]">
      <div className="relative h-[1566px] w-[2400px] overflow-hidden rounded-[12px] border border-black bg-black shadow-[0_36px_100px_rgba(0,0,0,0.68)]">
        <TabStrip />
        <Toolbar />
        <div className="relative flex h-[1406px] bg-[#eff1f6]">
          <Sidebar />
          <main className="flex-1 px-12">
            <div className="grid grid-cols-4 gap-12">
              <TrendCard />
              <TrendCard />
              <div className="h-[132px] rounded-b bg-white" />
              <div className="h-[132px] rounded-b bg-white" />
              <StatCard title="Quality Score" value="67%" tone="text-[#f3a53a]">
                <QualityBar />
              </StatCard>
              <StatCard title="Est. Shelf Life" value="4 days" tone="tracking-[-2px] text-[#262626]" />
            </div>
            <LeafletMap />
          </main>
          <div className="absolute top-[480px] right-0 flex size-24 items-center justify-center rounded-l-lg bg-[#4390f7] text-white">
            <AiOutlineSetting className="size-11" />
          </div>
        </div>
        <div className="pointer-events-none absolute inset-0 z-20 rounded-[11px] shadow-[inset_0_2px_0_rgba(255,255,255,0.28),inset_2px_0_0_rgba(255,255,255,0.14),inset_-2px_0_0_rgba(255,255,255,0.14)]" />
      </div>
    </div>
  );
}
